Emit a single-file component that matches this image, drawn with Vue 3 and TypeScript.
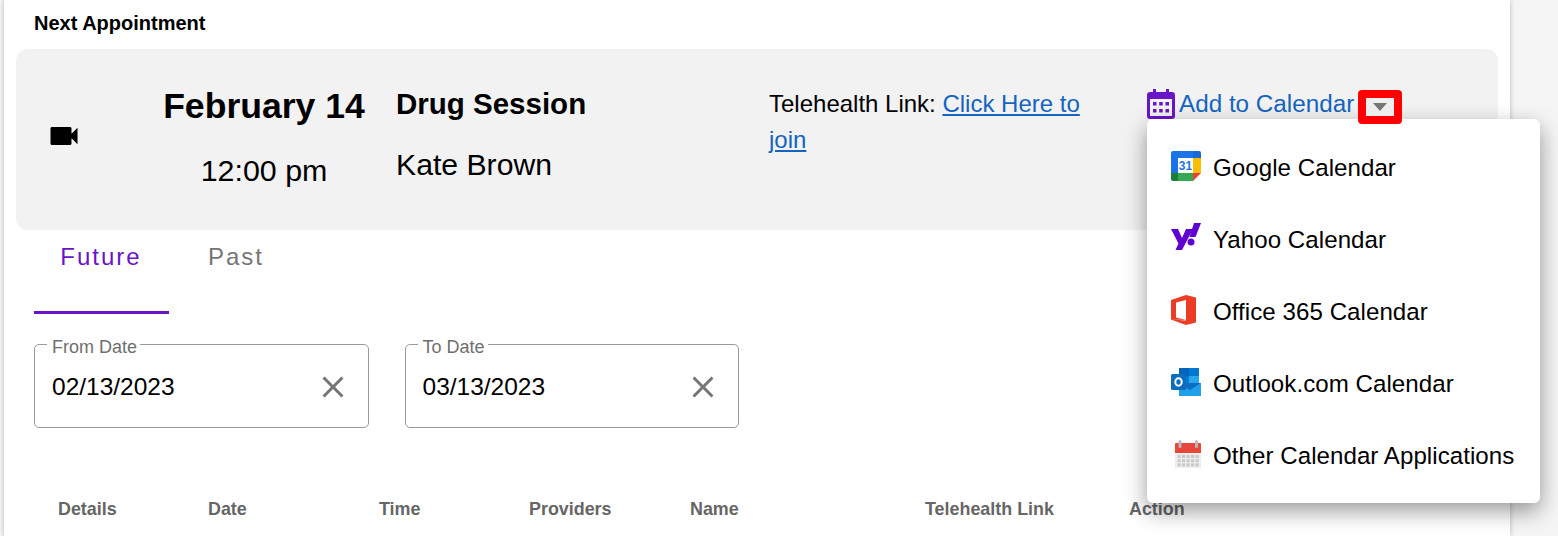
<script setup lang="ts">
interface DateField {
  label: string
  value: string
}

const dateFields: DateField[] = [
  { label: 'From Date', value: '02/13/2023' },
  { label: 'To Date', value: '03/13/2023' },
]

const columns = [
  { label: 'Details', width: 150 },
  { label: 'Date', width: 171 },
  { label: 'Time', width: 150 },
  { label: 'Providers', width: 161 },
  { label: 'Name', width: 235 },
  { label: 'Telehealth Link', width: 204 },
  { label: 'Action', width: 100 },
]

const calendars = [
  { id: 'google', label: 'Google Calendar' },
  { id: 'yahoo', label: 'Yahoo Calendar' },
  { id: 'office', label: 'Office 365 Calendar' },
  { id: 'outlook', label: 'Outlook.com Calendar' },
  { id: 'other', label: 'Other Calendar Applications' },
]

// Day cells on the generic calendar icon
const dayCells = [0, 1, 2, 3, 4].flatMap((c) => [0, 1, 2].map((r) => ({ x: 6.5 + c * 4.5, y: 16 + r * 4.2 })))
</script>

<template>
  <div class="page">
    <main class="card">
      <h2 class="heading">Next Appointment</h2>

      <section class="next">
        <div class="video-col">
          <svg width="36" height="36" viewBox="0 0 24 24" fill="#000">
            <path d="M17 10.5V7c0-.55-.45-1-1-1H4c-.55 0-1 .45-1 1v10c0 .55.45 1 1 1h12c.55 0 1-.45 1-1v-3.5l4 4v-11l-4 4z" />
          </svg>
        </div>
        <div class="when">
          <div class="when-date">February 14</div>
          <div class="when-time">12:00 pm</div>
        </div>
        <div class="what">
          <div class="what-title">Drug Session</div>
          <div class="what-name">Kate Brown</div>
        </div>
        <div class="link-col">
          Telehealth Link: <a class="link" href="#">Click Here to join</a>
        </div>
        <div class="add-col">
          <svg class="cal-icon" width="28" height="30" viewBox="0 0 28 30">
            <path fill="#6a14c8" d="M6 0h3v3h10V0h3v3h3a3 3 0 0 1 3 3v21a3 3 0 0 1-3 3H3a3 3 0 0 1-3-3V6a3 3 0 0 1 3-3h3z" />
            <rect x="3" y="10" width="22" height="17" fill="#f2f2f2" />
            <g fill="#6a14c8">
              <rect x="6" y="13" width="3.5" height="3.5" />
              <rect x="12.2" y="13" width="3.5" height="3.5" />
              <rect x="18.5" y="13" width="3.5" height="3.5" />
              <rect x="6" y="20" width="3.5" height="3.5" />
              <rect x="12.2" y="20" width="3.5" height="3.5" />
              <rect x="18.5" y="20" width="3.5" height="3.5" />
            </g>
          </svg>
          <a class="add-link" href="#">Add to Calendar</a>
          <span class="caret-box"><span class="caret"></span></span>

          <ul class="menu">
            <li v-for="cal in calendars" :key="cal.id" class="menu-item">
              <svg v-if="cal.id === 'google'" class="brand" width="30" height="30" viewBox="0 0 30 30">
                <path fill="#1a73e8" d="M2 0h20v7H7v15H0V2a2 2 0 0 1 2-2z" />
                <path fill="#1967d2" d="M22 0h6a2 2 0 0 1 2 2v5h-8z" />
                <path fill="#fbbc04" d="M22 7h8v15h-8z" />
                <path fill="#34a853" d="M7 22h15v8H7z" />
                <path fill="#188038" d="M0 22h7v8H2a2 2 0 0 1-2-2z" />
                <path fill="#ea4335" d="M22 22h8l-8 8z" />
                <rect x="7" y="7" width="15" height="15" fill="#fff" />
                <text x="14.5" y="19" text-anchor="middle" class="g-num">31</text>
              </svg>
              <svg v-else-if="cal.id === 'yahoo'" class="brand" width="30" height="30" viewBox="0 0 30 30">
                <path fill="#6001d2" d="M0 6h7l4 9 4-9h7L11 27H4.5l3-6.5z" />
                <circle cx="20" cy="19" r="3.5" fill="#6001d2" />
                <path fill="#6001d2" d="M23 0h7l-5.5 14h-6z" />
              </svg>
              <svg v-else-if="cal.id === 'office'" class="brand" width="30" height="30" viewBox="0 0 30 30">
                <path fill="#eb3c25" d="M0 5 15 0l10 2.5v25L15 30 0 24.500z" />
                <path fill="#fff" d="M5 7.500 15 5v20L5 22.500z" />
                <path fill="#fff" d="M0 24.500 15 25v.6z" />
              </svg>
              <svg v-else-if="cal.id === 'outlook'" class="brand" width="30" height="30" viewBox="0 0 30 30">
                <rect x="8" y="1" width="10" height="8" fill="#0364b8" />
                <rect x="18" y="1" width="10" height="8" fill="#0078d4" />
                <rect x="8" y="9" width="10" height="8" fill="#0078d4" />
                <rect x="18" y="9" width="10" height="8" fill="#28a8ea" />
                <path fill="#0a6fc4" d="M8 16h22v12a1 1 0 0 1-1 1H9a1 1 0 0 1-1-1z" />
                <path fill="#1fa0e8" d="M8 17l11 6 11-7v12a1 1 0 0 1-1 1H9a1 1 0 0 1-1-1z" />
                <rect x="0" y="7" width="15" height="16" rx="1.500" fill="#0f6cbd" />
                <ellipse cx="7.500" cy="15" rx="3.200" ry="3.800" fill="none" stroke="#fff" stroke-width="2" />
              </svg>
              <svg v-else class="brand" width="30" height="30" viewBox="0 0 30 30">
                <rect x="4" y="5" width="26" height="24" fill="#eeeeee" />
                <path fill="#e8483c" d="M5 4h24a1 1 0 0 1 1 1v9H4V5a1 1 0 0 1 1-1z" />
                <rect x="7.500" y="1" width="3" height="8" rx="1.500" fill="#b9b9b9" />
                <rect x="24" y="1" width="3" height="8" rx="1.500" fill="#b9b9b9" />
                <rect v-for="(cell, i) in dayCells" :key="i" :x="cell.x" :y="cell.y" width="3.200" height="3" fill="#c9c9c9" />
              </svg>
              <span>{{ cal.label }}</span>
            </li>
          </ul>
        </div>
      </section>

      <nav class="tabs">
        <div class="tab tab-active">Future</div>
        <div class="tab">Past</div>
      </nav>

      <div class="filters">
        <fieldset v-for="field in dateFields" :key="field.label" class="date-field">
          <legend class="date-label">{{ field.label }}</legend>
          <span class="date-value">{{ field.value }}</span>
          <svg width="36" height="36" viewBox="0 0 24 24" fill="#757575">
            <path d="M19 6.41 17.59 5 12 10.59 6.41 5 5 6.41 10.59 12 5 17.59 6.41 19 12 13.41 17.59 19 19 17.59 13.41 12z" />
          </svg>
        </fieldset>
      </div>

      <div class="thead">
        <span v-for="col in columns" :key="col.label" class="th" :style="{ width: col.width + 'px' }">{{ col.label }}</span>
      </div>
    </main>
  </div>
</template>

<style>
html,
body {
  margin: 0;
  background: #f5f5f5;
}
</style>

<style scoped>
.page {
  height: 536px;
  overflow: hidden;
  padding-left: 4px;
  font-family: 'Liberation Sans', Arial, sans-serif;
  color: #000;
}

.card {
  width: 1506px;
  height: 536px;
  box-sizing: border-box;
  padding: 0 12px;
  background: #fff;
  box-shadow: 0 0 5px rgba(0, 0, 0, 0.25);
}

.heading {
  margin: 0;
  padding: 11px 0 0 18px;
  height: 49px;
  box-sizing: border-box;
  font-size: 20px;
  line-height: 24px;
  font-weight: 700;
}

.next {
  display: grid;
  grid-template-columns: 147px 233px 373px 378px 1fr;
  height: 181px;
  background: #f2f2f2;
  border-radius: 12px;
}

.video-col {
  display: flex;
  justify-content: center;
  padding: 69px 0 0 0;
  width: 96px;
}

.when {
  width: 202px;
  text-align: center;
}

.when-date {
  margin-top: 36px;
  font-size: 35.6px;
  line-height: 42px;
  font-weight: 700;
}

.when-time {
  margin-top: 23px;
  font-size: 30.4px;
  line-height: 40px;
}

.what-title {
  margin-top: 36px;
  font-size: 29.5px;
  line-height: 38px;
  font-weight: 700;
}

.what-name {
  margin-top: 23px;
  font-size: 30.2px;
  line-height: 38px;
}

.link-col {
  width: 330px;
  padding-top: 37px;
  font-size: 24px;
  line-height: 36px;
}

.link {
  color: #1565c0;
}

.add-col {
  position: relative;
  display: flex;
  align-items: flex-start;
  padding-top: 40px;
}

.cal-icon {
  flex: none;
}

.add-link {
  margin: -3px 0 0 4px;
  font-size: 24.25px;
  line-height: 36px;
  color: #1565c0;
  text-decoration: none;
  white-space: nowrap;
}

.caret-box {
  position: relative;
  z-index: 2;
  display: flex;
  align-items: center;
  justify-content: center;
  width: 28px;
  height: 18px;
  margin: 1px 0 0 4px;
  background: #eee;
  border: 8px solid #f00;
  border-radius: 4px;
}

.caret {
  width: 0;
  height: 0;
  border-left: 7px solid transparent;
  border-right: 7px solid transparent;
  border-top: 8px solid #757575;
}

.menu {
  position: absolute;
  z-index: 1;
  top: 70px;
  left: 0;
  width: 393px;
  height: 384px;
  box-sizing: border-box;
  margin: 0;
  padding: 13px 0 0 24px;
  list-style: none;
  background: #fff;
  border-radius: 6px;
  box-shadow: 0 8px 22px rgba(0, 0, 0, 0.4);
}

.menu-item {
  display: flex;
  align-items: center;
  gap: 12px;
  height: 72px;
  font-size: 24.1px;
  letter-spacing: 0.05px;
  white-space: nowrap;
}

.brand {
  flex: none;
  margin-bottom: 4px;
}

.g-num {
  font-family: 'Liberation Sans', Arial, sans-serif;
  font-size: 12px;
  font-weight: 700;
  fill: #1a73e8;
}

.tabs {
  display: flex;
  margin-left: 18px;
  height: 84px;
}

.tab {
  width: 135px;
  height: 84px;
  box-sizing: border-box;
  padding: 13px 1px 0 0;
  text-align: center;
  font-size: 24px;
  line-height: 28px;
  letter-spacing: 2px;
  color: #757575;
}

.tab-active {
  color: #6a14c8;
  border-bottom: 3px solid #6a14c8;
}

.filters {
  display: flex;
  gap: 36px;
  margin: 30px 0 0 18px;
}

.date-field {
  display: flex;
  align-items: center;
  justify-content: space-between;
  width: 334.5px;
  height: 96px;
  box-sizing: border-box;
  margin: -12px 0 0;
  padding: 0 17px 10px 17px;
  border: 1px solid #9a9a9a;
  border-radius: 5px;
}

.date-label {
  margin-left: -5px;
  padding: 6px 3px 0 5px;
  font-size: 18px;
  line-height: 18px;
  color: #6f6f6f;
}

.date-value {
  font-size: 24.5px;
}

.thead {
  display: flex;
  margin: 69px 0 0 42px;
}

.th {
  flex: none;
  font-size: 17.9px;
  line-height: 24px;
  font-weight: 700;
  color: #666;
}
</style>
